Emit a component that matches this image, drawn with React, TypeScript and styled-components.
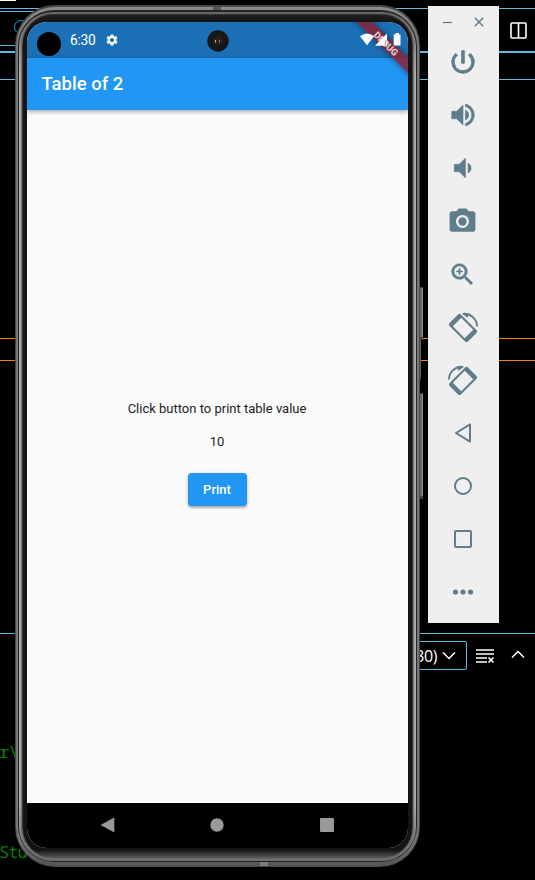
import React from 'react';
import styled, { createGlobalStyle } from 'styled-components';
import {
  MdCameraAlt,
  MdPowerSettingsNew,
  MdSettings,
  MdVolumeDown,
  MdVolumeUp,
  MdZoomIn,
} from 'react-icons/md';

const line = '#62bcdc';
const slate = '#607d8b';

const GlobalStyle = createGlobalStyle`
  * { box-sizing: border-box; }
  body { margin: 0; background: #000; }
  svg { display: block; flex: none; }
`;

const Desktop = styled.main`
  position: relative;
  width: 535px;
  height: 880px;
  overflow: hidden;
  background: #000;
`;

/* ---------- editor behind the emulator ---------- */

const Editor = styled.div`
  display: flex;
  flex-direction: column;
  height: 100%;
`;

const Strip = styled.div<{ $h: number; $edge?: string; $weight?: number }>`
  display: flex;
  flex: none;
  justify-content: space-between;
  height: ${(p) => p.$h}px;
  border-bottom: ${(p) => p.$weight ?? 1}px solid ${(p) => p.$edge ?? 'transparent'};
`;

const WhiteTab = styled.div`
  width: 16px;
  height: 1px;
  background: #fff;
`;

const SearchBox = styled.div`
  width: 60px;
  height: 35px;
  margin-top: 2px;
  padding: 8px 0 0 14px;
  border: solid ${line};
  border-width: 1px 0;
`;

const SearchLens = styled.div`
  width: 14px;
  height: 14px;
  border: 1px solid #18a7dd;
  border-radius: 50%;
`;

const SplitIcon = styled.svg`
  margin: 13px 8px 0 0;
`;

const PanelBar = styled.div`
  display: flex;
  flex: none;
  align-items: center;
  height: 43px;
  padding-left: 380px;
`;

const Picker = styled.div`
  display: flex;
  align-items: center;
  justify-content: flex-end;
  gap: 5px;
  width: 87px;
  height: 29px;
  padding-right: 10px;
  border: 1px solid ${line};
  border-radius: 2px;
  color: #fff;
  font: 16px 'Open Sans', 'Noto Sans', sans-serif;
`;

const PickerText = styled.span`
  letter-spacing: -0.4px;
  white-space: nowrap;
`;

const ClearIcon = styled.svg`
  margin-left: 9px;
`;

const UpIcon = styled.svg`
  margin: -2px 0 0 16px;
`;

const Terminal = styled.div`
  display: flex;
  flex-direction: column;
  gap: 80px;
  margin-left: -1px;
  padding-top: 65px;
  color: #078007;
  font: 17px/20px 'Noto Sans Mono', 'DejaVu Sans Mono', monospace;
  letter-spacing: -0.9px;
`;

/* ---------- phone ---------- */

const Phone = styled.section`
  position: absolute;
  left: 15px;
  top: 5px;
  display: flex;
  align-items: flex-start;
  width: 409px;
`;

const Ring = styled.div<{ $pad: string; $fill: string; $r: number }>`
  width: 100%;
  height: 100%;
  padding: ${(p) => p.$pad};
  border-radius: ${(p) => p.$r}px;
  background: ${(p) => p.$fill};
`;

const Body = styled.div`
  flex: none;
  width: 405px;
  height: 862px;
`;

const SideKeys = styled.div`
  display: flex;
  flex-direction: column;
  padding-top: 282px;
`;

const SideKey = styled.div<{ $h: number; $w: number; $gap?: number }>`
  width: ${(p) => p.$w}px;
  height: ${(p) => p.$h}px;
  margin-top: ${(p) => p.$gap ?? 0}px;
  border: solid #444;
  border-width: 1px 0 3px;
  background: linear-gradient(90deg, #666 0 66%, #909090 66%);
`;

const Screen = styled.div`
  position: relative;
  display: flex;
  flex-direction: column;
  width: 381px;
  height: 826px;
  overflow: hidden;
  border-radius: 20px;
  background: #fafafa;
  font-family: Roboto, sans-serif;
`;

const StatusBar = styled.div`
  display: grid;
  grid-template-columns: 179.5px 1fr auto;
  flex: none;
  height: 36px;
  color: #fff;
  background: #1c70b6;
`;

const StatusLeft = styled.div`
  display: flex;
  align-items: center;
  padding-left: 10px;
`;

const Punch = styled.div`
  width: 24px;
  height: 24px;
  margin-top: 7px;
  border-radius: 50%;
  background: #000;
`;

const Clock = styled.span`
  width: 26px;
  margin: 0 9px 0 9px;
  font-size: 13.8px;
  letter-spacing: -0.3px;
  line-height: 36px;
  white-space: nowrap;
`;

const Lens = styled.svg`
  margin-top: 8px;
`;

const StatusRight = styled.svg`
  z-index: 3;
  margin: 11px 6px 0 0;
`;

const AppBar = styled.header`
  flex: none;
  z-index: 1;
  height: 51.5px;
  padding-left: 14.5px;
  color: #fff;
  background: #2196f3;
  box-shadow: 0 2px 4px rgba(0, 0, 0, 0.22), 0 1px 6px rgba(0, 0, 0, 0.14);
  font-size: 18.5px;
  font-weight: 500;
  line-height: 53px;
`;

const Ribbon = styled.div`
  position: absolute;
  z-index: 2;
  left: 309px;
  top: 15.5px;
  width: 100px;
  height: 11.4px;
  transform: rotate(45deg);
  background: rgba(148, 22, 35, 0.77);
  box-shadow: 0 0 6px rgba(0, 0, 0, 0.5);
  color: rgba(255, 255, 255, 0.75);
  font-size: 9.4px;
  font-weight: 900;
  line-height: 11.6px;
  text-align: center;
`;

const Content = styled.div`
  display: flex;
  flex: 1;
  flex-direction: column;
  align-items: center;
  padding: 290px 1px 0 0;
  color: #212121;
  font-size: 13px;
  line-height: 18px;
`;

const Value = styled.p`
  margin: 15px 0 22.5px;
`;

const Caption = styled.p`
  margin: 0;
`;

const PrintButton = styled.button`
  width: 59px;
  height: 33px;
  padding: 0;
  border: 0;
  border-radius: 3.7px;
  color: #fff;
  background: #2196f3;
  box-shadow: 0 2px 2px rgba(0, 0, 0, 0.22), 0 1px 4px rgba(0, 0, 0, 0.16);
  font: 500 13px/34px Roboto, sans-serif;
`;

const NavBar = styled.nav`
  display: grid;
  grid-template-columns: repeat(3, 110px);
  justify-content: center;
  justify-items: center;
  align-items: center;
  flex: none;
  height: 45px;
  padding: 0 1px 1px 0;
  background: #000;
`;

/* ---------- emulator controls ---------- */

const Controls = styled.aside`
  position: absolute;
  left: 428px;
  top: 6px;
  display: flex;
  flex-direction: column;
  width: 71px;
  height: 617px;
  background: #efefef;
`;

const WindowButtons = styled.div`
  display: flex;
  align-items: center;
  justify-content: space-between;
  height: 29.5px;
  padding: 3px 15px 0;
`;

const Control = styled.div`
  display: flex;
  flex: none;
  align-items: center;
  justify-content: center;
  height: 53px;
  padding-right: 1.6px;
  color: ${slate};
`;

const Heavy = styled.span<{ $by: number }>`
  path:not([fill='none']) {
    stroke: currentColor;
    stroke-width: ${(p) => p.$by};
  }
`;

const rings = [
  { pad: '2px 1px 1px', fill: '#484848', r: 40 },
  {
    pad: '3px 2px 4px',
    fill: `linear-gradient(#555, #555) 197px 0 / 8px 3px no-repeat,
      linear-gradient(#7c7c7c, #7c7c7c) 244px 100% / 8px 4px no-repeat,
      linear-gradient(#8a8a8a, #777 5%, #777 97%, #555)`,
    r: 39,
  },
  { pad: '2px 1px 1px', fill: '#242424', r: 36 },
  {
    pad: '2px 2px 1px',
    fill: 'linear-gradient(#666, #777 2%, #aaa 7%, #aaa 93%, #777 98%, #6c6c6c)',
    r: 34,
  },
  { pad: '0 1px 1px', fill: 'linear-gradient(#505050, #707070 5%, #707070)', r: 32 },
  { pad: '1px', fill: 'linear-gradient(#333, #3c3c3c 5%, #3c3c3c 96%, #666)', r: 31 },
  {
    pad: '7px 4px 9px',
    fill: 'linear-gradient(#202020, #141414 7px, #141414 calc(100% - 8px), #585858)',
    r: 30,
  },
];

function Casing({ children }: { children: React.ReactNode }) {
  return (
    <Body>
      {rings.reduceRight<React.ReactNode>(
        (inner, ring) => (
          <Ring $pad={ring.pad} $fill={ring.fill} $r={ring.r}>
            {inner}
          </Ring>
        ),
        children,
      )}
    </Body>
  );
}

function Rotate({ flip }: { flip?: boolean }) {
  return (
    <svg width="30" height="30" viewBox="0 0 30 30">
      <g transform={flip ? 'translate(30 0) scale(-1 1)' : undefined}>
        <g transform="rotate(45 15 16)">
          <rect x="2" y="8" width="26" height="16" rx="2" fill={slate} />
          <rect x="6.6" y="10" width="16.8" height="12" fill="#efefef" />
        </g>
        <path d="M15 1.9 C22 .8 29.2 7 29 14.5" fill="none" stroke={slate} strokeWidth="1.9" />
        <path d="M14 1.8 L21 1.5 L19.5 5.8Z" fill={slate} />
      </g>
    </svg>
  );
}

const shape = { fill: 'none', stroke: slate, strokeWidth: 2 };

const controls: React.ReactNode[] = [
  <Heavy $by={0.8}><MdPowerSettingsNew size={30} /></Heavy>,
  <Heavy $by={0.5}><MdVolumeUp size={30} /></Heavy>,
  <Heavy $by={0.4}><MdVolumeDown size={30} /></Heavy>,
  <MdCameraAlt size={31} />,
  <Heavy $by={0.4}><MdZoomIn size={29} /></Heavy>,
  <Rotate />,
  <Rotate flip />,
  <svg width="20" height="20"><path d="M17 1.4V18.6L3 10Z" strokeLinejoin="round" {...shape} /></svg>,
  <svg width="20" height="20"><circle cx="10" cy="10" r="8" {...shape} /></svg>,
  <svg width="20" height="20"><rect x="2" y="2" width="16" height="16" rx="1" {...shape} /></svg>,
  <svg width="22" height="8" fill={slate}><circle cx="3.5" cy="4" r="2.6" /><circle cx="11" cy="4" r="2.6" /><circle cx="18.5" cy="4" r="2.6" /></svg>,
];

export default function App() {
  return (
    <Desktop>
      <GlobalStyle />
      <Editor>
        <Strip $h={9} $edge={line}><WhiteTab /></Strip>
        <Strip $h={44} $edge={line} $weight={2}>
          <SearchBox><SearchLens /></SearchBox>
          <SplitIcon width="17" height="17" fill="none" stroke="#fff" strokeWidth="1.6">
            <rect x="1" y="1" width="15" height="15" rx="1" />
            <path d="M8.5 1V16" />
          </SplitIcon>
        </Strip>
        <Strip $h={27} $edge={line} />
        <Strip $h={259} $edge="#f38518" />
        <Strip $h={22} $edge="#f38518" />
        <Strip $h={273} $edge={line} />
        <PanelBar>
          <Picker>
            <PickerText>30)</PickerText>
            <svg width="14" height="9" fill="none" stroke="#fff" strokeWidth="1.5"><path d="M1 1.5L7 7.5L13 1.5" /></svg>
          </Picker>
          <ClearIcon width="19" height="16" fill="none" stroke="#fff" strokeWidth="1.6">
            <path d="M0 2H18M0 6H18M0 10H11M0 14H11M12.5 9.5L17.5 14.5M17.5 9.5L12.5 14.5" />
          </ClearIcon>
          <UpIcon width="14" height="9" fill="none" stroke="#fff" strokeWidth="1.5"><path d="M1 7.5L7 1.5L13 7.5" /></UpIcon>
        </PanelBar>
        <Terminal><span>r\</span><span>Stu</span></Terminal>
      </Editor>

      <Phone>
        <Casing>
          <Screen>
            <StatusBar>
              <StatusLeft>
                <Punch />
                <Clock>6:30</Clock>
                <MdSettings size={14} />
              </StatusLeft>
              <Lens width="22" height="22">
                <circle cx="11" cy="11" r="10.7" fill="#171717" />
                <circle cx="11" cy="11" r="5" fill="#24211f" />
                <path d="M8.5 10V12.5" stroke="#c9b49a" />
                <path d="M12.5 10V12.5" stroke="#bd6a50" />
              </Lens>
              <StatusRight width="42" height="14" viewBox="0 0 42 14" fill="#fff">
                <path d="M0 3.2Q7 -2 14 3.2L7 12.2Z" />
                <path d="M27 .5V7.2H24.8V12.7H15ZM26 8.5H27.2V12.7H26Z" />
                <path d="M35.5 0H38.8V1.5H40.5V12.5H33.7V1.5H35.5Z" />
              </StatusRight>
            </StatusBar>
            <AppBar>Table of 2</AppBar>
            <Content>
              <Caption>Click button to print table value</Caption>
              <Value>10</Value>
              <PrintButton>Print</PrintButton>
            </Content>
            <NavBar>
              <svg width="15" height="16" fill="#999"><path d="M14.3 .5V15.5L.5 8Z" /></svg>
              <svg width="14" height="14" fill="#999"><circle cx="7" cy="7" r="6.7" /></svg>
              <svg width="14" height="14" fill="#999"><rect width="14" height="14" rx="1" /></svg>
            </NavBar>
            <Ribbon>DEBUG</Ribbon>
          </Screen>
        </Casing>
        <SideKeys>
          <SideKey $w={3} $h={53} />
          <SideKey $w={1} $h={40} />
          <SideKey $w={3} $h={106} $gap={13} />
        </SideKeys>
      </Phone>

      <Controls>
        <WindowButtons>
          <svg width="9" height="9"><path d="M0 4.5H9" stroke={slate} strokeWidth="1.2" /></svg>
          <svg width="10" height="10"><path d="M.8 .8L9.2 9.2M9.2 .8L.8 9.2" stroke={slate} strokeWidth="1.5" /></svg>
        </WindowButtons>
        {controls.map((icon, i) => (
          <Control key={i}>{icon}</Control>
        ))}
      </Controls>
    </Desktop>
  );
}
